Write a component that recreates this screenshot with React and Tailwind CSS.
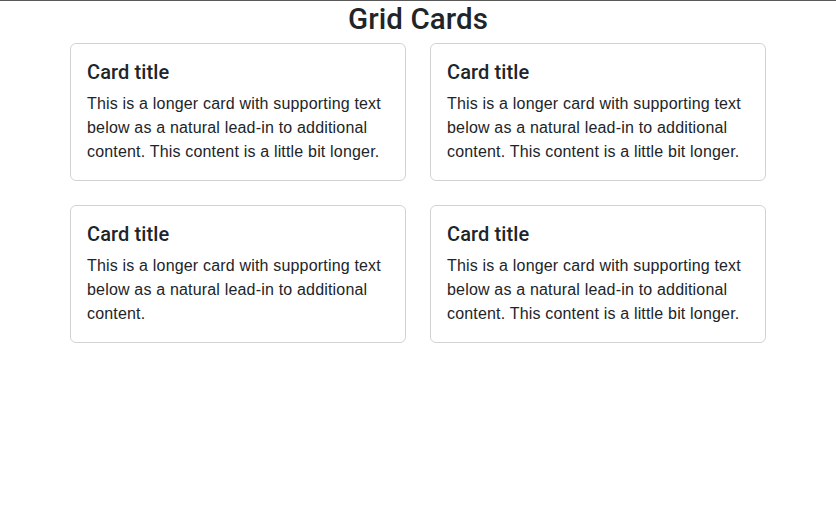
export default function App() {
  const long = "This is a longer card with supporting text below as a natural lead-in to additional content. This content is a little bit longer.";
  const short = "This is a longer card with supporting text below as a natural lead-in to additional content.";
  const cards = [long, long, short, long];
  return (
    <div className="min-h-[510px] bg-white text-[#212529]" style={{ fontFamily: '"Liberation Sans", Arial, sans-serif' }}>
      <div className="h-px bg-[#595959]" />
      <div className="mx-auto w-[720px] px-3">
        <h2 className="mb-[7px] pt-px text-center font-['Roboto',sans-serif] text-[29.5px] font-medium leading-[34px] tracking-[0.1px]">Grid Cards</h2>
        <div className="grid grid-cols-2 gap-x-6 gap-y-6">
          {cards.map((t, i) => (
            <div key={i} className="rounded-md border border-[rgba(0,0,0,0.175)] p-4">
              <h5 className="mb-2 pt-px font-['Roboto',sans-serif] text-[20px] font-medium leading-[23px] tracking-[0.1px]">Card title</h5>
              <p className="text-base leading-6 tracking-[0.18px]">{t}</p>
            </div>
          ))}
        </div>
      </div>
    </div>
  );
}
